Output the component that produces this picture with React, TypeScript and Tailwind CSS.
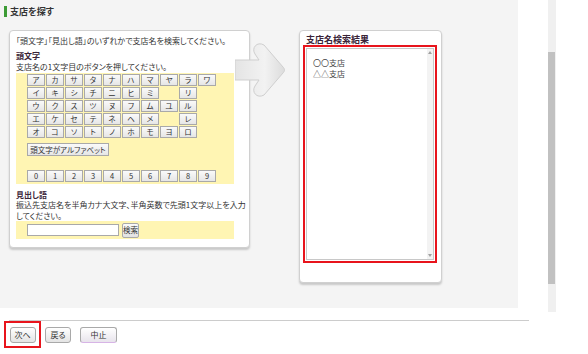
import React from "react";

const kanaRows: (string | null)[][] = [
  ["ア", "カ", "サ", "タ", "ナ", "ハ", "マ", "ヤ", "ラ", "ワ"],
  ["イ", "キ", "シ", "チ", "ニ", "ヒ", "ミ", null, "リ"],
  ["ウ", "ク", "ス", "ツ", "ヌ", "フ", "ム", "ユ", "ル"],
  ["エ", "ケ", "セ", "テ", "ネ", "ヘ", "メ", null, "レ"],
  ["オ", "コ", "ソ", "ト", "ノ", "ホ", "モ", "ヨ", "ロ"],
];

const digits = ["0", "1", "2", "3", "4", "5", "6", "7", "8", "9"];

function KeyButton({ label }: { label: string }) {
  return (
    <button className="w-[18px] h-[12px] flex items-center justify-center border border-[#a9a9a9] bg-gradient-to-b from-[#fafafa] to-[#e6e6e6] text-[7.5px] leading-none text-[#333]">
      {label}
    </button>
  );
}

function Arrow() {
  return (
    <svg width="52" height="62" viewBox="0 0 52 62" className="block">
      <defs>
        <linearGradient id="arrowFill" x1="0" y1="0" x2="1" y2="0">
          <stop offset="0" stopColor="#e4e4e4" />
          <stop offset="0.6" stopColor="#f2f2f2" />
          <stop offset="1" stopColor="#dcdcdc" />
        </linearGradient>
      </defs>
      <path
        d="M0 21 H24 L20 15 C16 9 22 2 29 6 L48 28 C50 30 50 32 48 34 L29 56 C22 60 16 53 20 47 L24 41 H0 Z"
        fill="url(#arrowFill)"
        stroke="#cfcfcf"
        strokeWidth="1"
      />
    </svg>
  );
}

export default function App() {
  return (
    <div className="w-[588px] h-[354px] bg-white flex overflow-hidden font-['Noto_Sans_CJK_JP',sans-serif] [font-feature-settings:'palt'] text-[#333]">
      <div className="w-[548px] flex flex-col">
        {/* Grey content area */}
        <div className="w-[518px] h-[308px] bg-[#f4f4f4] pt-[6px]">
          <div className="flex items-center pl-[4px] h-[11px]">
            <span className="w-[3px] h-[11px] bg-[#3d9b35]" />
            <span className="ml-[3px] text-[9px] font-bold leading-none text-[#333]">支店を探す</span>
          </div>

          <div className="flex items-start mt-[13px] pl-[9px]">
            {/* Left panel */}
            <div className="relative z-0 w-[241px] h-[218px] bg-white border border-[#d0d0d0] rounded-[4px] shadow-[0_2px_2px_rgba(0,0,0,0.18)] pl-[6px] pt-[4px]">
              <p className="text-[8px] leading-[11px]">「頭文字」「見出し語」のいずれかで支店名を検索してください。</p>
              <p className="mt-[5px] text-[8px] font-bold leading-[10px] text-[#3a2438]">頭文字</p>
              <p className="text-[8px] leading-[11px]">支店名の1文字目のボタンを押してください。</p>

              <div className="mt-[1px] w-[218px] h-[111px] bg-[#fff5b3] pl-[11px] pt-[1px] flex flex-col">
                <div className="flex flex-col gap-[1px]">
                  {kanaRows.map((row, i) => (
                    <div key={i} className="flex gap-[1px]">
                      {row.map((k, j) =>
                        k ? <KeyButton key={j} label={k} /> : <span key={j} className="w-[18px] h-[12px]" />
                      )}
                    </div>
                  ))}
                </div>
                <button className="mt-[5px] w-[82px] h-[13px] flex items-center justify-center border border-[#a9a9a9] bg-gradient-to-b from-[#fafafa] to-[#e6e6e6] text-[7.5px] leading-none text-[#333]">
                  頭文字がアルファベット
                </button>
                <div className="mt-[14px] flex gap-[1px]">
                  {digits.map((d) => (
                    <KeyButton key={d} label={d} />
                  ))}
                </div>
              </div>

              <p className="mt-[6px] text-[8px] font-bold leading-[10px] text-[#3a2438]">見出し語</p>
              <p className="w-[232px] text-[8px] leading-[10.5px]">
                振込先支店名を半角カナ大文字、半角英数で先頭1文字以上を入力してください。
              </p>
              <div className="w-[218px] h-[18px] bg-[#fff5b3] pl-[11px] flex items-center gap-[3px]">
                <input className="w-[92px] h-[12px] bg-white border border-[#a9a9a9] outline-none" />
                <button className="w-[17px] h-[15px] flex items-center justify-center border border-[#a9a9a9] rounded-[2px] bg-gradient-to-b from-[#fafafa] to-[#e2e2e2] text-[7.5px] leading-none">
                  検索
                </button>
              </div>
            </div>

            {/* Arrow */}
            <div className="relative z-10 w-[49px] -ml-[15px] mr-[15px] mt-[9px]">
              <Arrow />
            </div>

            {/* Right panel */}
            <div className="w-[143px] h-[253px] bg-white border border-[#d0d0d0] rounded-[4px] shadow-[0_2px_2px_rgba(0,0,0,0.18)] pl-[3px] pt-[4px]">
              <p className="pl-[3px] text-[9px] font-bold leading-[10px] text-[#3a2438]">支店名検索結果</p>
              <div className="w-[134px] h-[218px] border-2 border-[#e8141c] p-[1px]">
                <div className="w-full h-full border border-[#c8c8c8] flex">
                  <div className="flex-1 pl-[6px] pt-[8px] text-[8px] leading-[11px] text-[#444]">
                    <p>〇〇支店</p>
                    <p>△△支店</p>
                  </div>
                  <div className="w-[6px] bg-[#f3f3f3] flex flex-col justify-between items-center py-[2px]">
                    <span className="w-0 h-0 border-l-[2px] border-r-[2px] border-b-[3px] border-l-transparent border-r-transparent border-b-[#a0a0a0]" />
                    <span className="w-0 h-0 border-l-[2px] border-r-[2px] border-t-[3px] border-l-transparent border-r-transparent border-t-[#a0a0a0]" />
                  </div>
                </div>
              </div>
            </div>
          </div>
        </div>

        {/* Footer */}
        <div className="ml-[9px] mt-[12px] w-[520px] border-t border-[#cccccc]" />
        <div className="flex items-center pl-[4px]">
          <div className="w-[37px] h-[27px] border-2 border-[#e8141c] flex items-center justify-center">
            <button className="w-[26px] h-[16px] flex items-center justify-center border border-[#a9a9a9] rounded-[3px] bg-gradient-to-b from-white to-[#e4e4e4] text-[8px] leading-none">
              次へ
            </button>
          </div>
          <button className="ml-[4px] w-[26px] h-[16px] flex items-center justify-center border border-[#a9a9a9] rounded-[3px] bg-gradient-to-b from-white to-[#e4e4e4] text-[8px] leading-none">
            戻る
          </button>
          <button className="ml-[9px] w-[37px] h-[16px] flex items-center justify-center border border-[#a9a9a9] border-b-[#d7b4e6] rounded-[3px] bg-gradient-to-b from-white to-[#e8e4ec] text-[8px] leading-none">
            中止
          </button>
        </div>
      </div>

      {/* Page scrollbar */}
      <div className="w-[8px] h-[312px] bg-[#f0f0f0] pt-[52px]">
        <div className="w-[7px] h-[232px] bg-[#c1c1c1]" />
      </div>
    </div>
  );
}
